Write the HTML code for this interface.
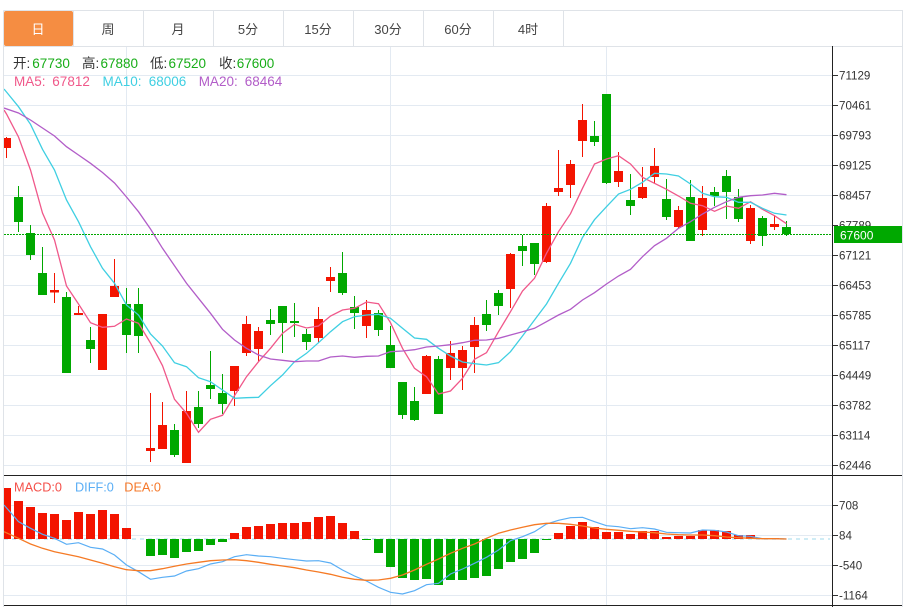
<!DOCTYPE html>
<html><head><meta charset="utf-8"><style>
html,body{margin:0;padding:0;background:#fff;width:906px;height:607px;overflow:hidden}
svg{display:block}
text{font-family:"Liberation Sans","Noto Sans CJK SC",sans-serif;font-size:11.6px}
.t{font-size:13px;fill:#444;text-anchor:middle}
.a{fill:#333}.g{fill:#18ad18}
.i{font-size:13.5px}
.m{font-size:12.7px}
</style></head><body>
<svg width="906" height="607" viewBox="0 0 906 607" xmlns="http://www.w3.org/2000/svg">
<defs><clipPath id="c"><rect x="4" y="46" width="828" height="561"/></clipPath></defs>
<rect width="906" height="607" fill="#fff"/>
<!-- grid -->
<path d="M4 75.5H832M4 105.5H832M4 135.5H832M4 165.5H832M4 195.5H832M4 225.5H832M4 255.5H832M4 285.5H832M4 315.5H832M4 345.5H832M4 375.5H832M4 405.5H832M4 435.5H832M4 465.5H832M4 505.5H832M4 535.5H832M4 565.5H832M4 595.5H832M126.5 47V605M390.5 47V605M606.5 47V605" stroke="#e3eaf2" stroke-width="1" fill="none"/>
<!-- frame and tabs -->
<path d="M3.5 10.5H902.5V607M3.5 10.5V607M4 46.5H902M73.5 11V46M143.5 11V46M213.5 11V46M283.5 11V46M353.5 11V46M423.5 11V46M493.5 11V46M563.5 11V46" stroke="#dfe3e8" fill="none"/>
<rect x="4" y="11" width="69" height="35" rx="2" fill="#f58d42"/>
<text x="38" y="34" class="t" style="fill:#fff">日</text>
<text x="108" y="34" class="t">周</text>
<text x="178" y="34" class="t">月</text>
<text x="248" y="34" class="t">5分</text>
<text x="318" y="34" class="t">15分</text>
<text x="388" y="34" class="t">30分</text>
<text x="458" y="34" class="t">60分</text>
<text x="528" y="34" class="t">4时</text>
<!-- info -->
<text x="13" y="68" class="a i">开:</text><text x="32.3" y="68" class="g i">67730</text>
<text x="82" y="68" class="a i">高:</text><text x="100.5" y="68" class="g i">67880</text>
<text x="150" y="68" class="a i">低:</text><text x="168.5" y="68" class="g i">67520</text>
<text x="219" y="68" class="a i">收:</text><text x="236.7" y="68" class="g i">67600</text>
<g class="i">
<text x="14" y="86" class="i" fill="#f0588a">MA5:</text><text x="52.3" y="86" class="i" fill="#f0588a">67812</text>
<text x="102.5" y="86" class="i" fill="#3fcfe2">MA10:</text><text x="148.7" y="86" class="i" fill="#3fcfe2">68006</text>
<text x="198.7" y="86" class="i" fill="#b25dc8">MA20:</text><text x="244.7" y="86" class="i" fill="#b25dc8">68464</text>
</g>
<g clip-path="url(#c)">
<!-- red wicks -->
<path stroke="#f31400" fill="none" d="M6.5 137V158M54.5 273V303M78.5 306V315M114.5 259V297M150.5 393V462M162.5 402V449M186.5 391V463M246.5 316V356M258.5 327V361M318.5 307V343M330.5 267V292M366.5 300V338M426.5 355V394M450.5 341V380M462.5 346V390M474.5 317V373M510.5 253V308M546.5 203V263M558.5 150V196M570.5 160V198M582.5 104V157M618.5 152V187M642.5 167V199M654.5 148V183M678.5 206V228M702.5 186V236M750.5 205V244M774.5 215V230"/>
<!-- green wicks -->
<path stroke="#00a800" fill="none" d="M18.5 186V232M30.5 225V260M42.5 247V295M66.5 292V373M90.5 327V363M126.5 288V353M138.5 288V353M174.5 424V457M198.5 391V428M210.5 351V399M222.5 374V414M270.5 309V335M282.5 306V353M294.5 303V337M306.5 329V350M342.5 252V295M354.5 296V329M378.5 310V336M390.5 326V368M402.5 382V419M414.5 387V421M438.5 356V414M486.5 300V331M498.5 290V315M522.5 235V266M534.5 243V275M594.5 121V146M606.5 94V184M630.5 174V215M666.5 179V220M690.5 180V241M714.5 187V206M726.5 170V219M738.5 189V222M762.5 216V246M786.5 221V236"/>
<!-- red bodies -->
<path fill="#f31400" d="M2 138h9v10h-9zM50 290h9v2.500h-9zM74 313h9v2h-9zM98 314h9v56h-9zM110 286h9v11h-9zM146 448h9v3h-9zM158 425h9v24h-9zM182 411h9v52h-9zM230 366h9v25h-9zM242 324h9v29h-9zM254 331h9v18h-9zM314 319h9v19h-9zM326 277h9v4h-9zM362 310h9v16h-9zM422 356h9v38h-9zM446 353h9v15h-9zM458 350h9v18h-9zM470 325h9v22h-9zM506 254h9v35h-9zM542 206h9v56h-9zM554 188h9v4h-9zM566 164h9v21h-9zM578 120h9v21h-9zM614 171h9v11h-9zM638 187h9v11h-9zM650 166h9v11h-9zM674 210h9v17h-9zM698 198h9v32h-9zM746 208h9v33h-9zM770 224h9v3h-9z"/>
<path stroke="#f31400" fill="none" d="M234.500 366V406"/>
<!-- green bodies -->
<path fill="#00a800" d="M14 197h9v25h-9zM26 233h9v22h-9zM38 273h9v22h-9zM62 297h9v76h-9zM86 340h9v9h-9zM122 304h9v31h-9zM134 304h9v32h-9zM170 430h9v25h-9zM194 407h9v17h-9zM206 385h9v4h-9zM218 393h9v11h-9zM266 320h9v4h-9zM278 306h9v17h-9zM290 321h9v2h-9zM302 334h9v8h-9zM338 273h9v20h-9zM350 307h9v6h-9zM374 313h9v17h-9zM386 345h9v23h-9zM398 382h9v33h-9zM410 401h9v19h-9zM434 359h9v55h-9zM482 314h9v11h-9zM494 293h9v13h-9zM518 246h9v5h-9zM530 243h9v21h-9zM590 136h9v6h-9zM602 94h9v89h-9zM626 200h9v6h-9zM662 199h9v18h-9zM686 197h9v44h-9zM710 192h9v4h-9zM722 176h9v16h-9zM734 197h9v22h-9zM758 218h9v18h-9zM782 227h9v7h-9z"/>
<!-- MA lines -->
<polyline fill="none" stroke="#f0588a" stroke-width="1.300" points="4,110 6.500,114 18.500,137 30.500,170 42.500,213 54.500,240 66.500,286 78.500,304 90.500,322.700 102.500,327.300 114.500,326.300 126.500,319 138.500,323.300 150.500,343 162.500,365.700 174.500,399.300 186.500,413.300 198.500,432.300 210.500,419.300 222.500,415.300 234.500,395.700 246.500,376.700 258.500,361.700 270.500,348.300 282.500,333.300 294.500,324.300 306.500,328 318.500,326 330.500,316 342.500,310 354.500,308.300 366.500,302 378.500,303.700 390.500,322.700 402.500,348.300 414.500,368.300 426.500,376.700 438.500,394 450.500,391 462.500,378.300 474.500,359.300 486.500,352.700 498.500,331.700 510.500,311.700 522.500,291 534.500,278.300 546.500,253.300 558.500,231.700 570.500,213.700 582.500,188.300 594.500,164 606.500,159 618.500,155.700 630.500,164 642.500,177.300 654.500,183.300 666.500,189.300 678.500,196 690.500,203.300 702.500,205.700 714.500,211.300 726.500,206 738.500,208.300 750.500,201.700 762.500,209.300 774.500,215.700 786.500,223.700"/>
<polyline fill="none" stroke="#3fcfe2" stroke-width="1.300" points="4,89 6.500,92 18.500,106.700 30.500,124.300 42.500,149.300 54.500,170 66.500,200 78.500,221.700 90.500,246.700 102.500,268.300 114.500,283.300 126.500,305 138.500,315 150.500,334 162.500,346 174.500,362.700 186.500,366.700 198.500,377.700 210.500,381.700 222.500,390 234.500,398.300 246.500,397.700 258.500,397.300 270.500,385.700 282.500,375 294.500,361.700 306.500,353.300 318.500,342.700 330.500,331.700 342.500,321.700 354.500,316.700 366.500,315 378.500,314.300 390.500,318.300 402.500,328.300 414.500,338 426.500,339.300 438.500,348.300 450.500,356 462.500,362 474.500,363.700 486.500,365 498.500,362.700 510.500,351.700 522.500,336 534.500,320 546.500,304 558.500,283.300 570.500,263.300 582.500,237.500 594.500,219.700 606.500,206.700 618.500,194 630.500,189.300 642.500,182.300 654.500,173.300 666.500,174 678.500,176 690.500,184 702.500,193.300 714.500,196.700 726.500,197.300 738.500,202.300 750.500,202.300 762.500,208.300 774.500,213.300 786.500,215"/>
<polyline fill="none" stroke="#b25dc8" stroke-width="1.300" points="4,108 18.500,113 30.500,120 42.500,128 54.500,136 66.500,146.700 78.500,155 90.500,163.300 102.500,172.500 114.500,183 126.500,197 138.500,211.700 150.500,229 162.500,248.300 174.500,265.700 186.500,283.300 198.500,298.300 210.500,313.300 222.500,329.300 234.500,340 246.500,348.300 258.500,355 270.500,359 282.500,360.300 294.500,361.700 306.500,361 318.500,361 330.500,357 342.500,356 354.500,357.300 366.500,356.300 378.500,356 390.500,351.700 402.500,351 414.500,349.700 426.500,347 438.500,346 450.500,344.700 462.500,342.700 474.500,340.300 486.500,340 498.500,338.300 510.500,335 522.500,331.700 534.500,328.300 546.500,321.700 558.500,315 570.500,309.300 582.500,300 594.500,292.700 606.500,284 618.500,276 630.500,269.300 642.500,256.700 654.500,245.700 666.500,238.300 678.500,228.300 690.500,221.700 702.500,214 714.500,207.300 726.500,201.700 738.500,197.300 750.500,195.700 762.500,195 774.500,193.300 786.500,194.700"/>
<!-- price line -->
<path d="M4 234.500H832" stroke="#00a800" stroke-dasharray="2 1" fill="none"/>
<!-- MACD zero -->
<path d="M4 539H830" stroke="#bfe6f2" stroke-width="1.500" stroke-dasharray="4 4" fill="none"/>
<!-- MACD bars -->
<path fill="#f31400" d="M2 488h9v51h-9zM14 501h9v38h-9zM26 507h9v32h-9zM38 513h9v26h-9zM50 514h9v25h-9zM62 520h9v19h-9zM74 512h9v27h-9zM86 514h9v25h-9zM98 510h9v29h-9zM110 514h9v25h-9zM122 528h9v11h-9zM230 533h9v6h-9zM242 527h9v12h-9zM254 526h9v13h-9zM266 524h9v15h-9zM278 523h9v16h-9zM290 523h9v16h-9zM302 522h9v17h-9zM314 517h9v22h-9zM326 516h9v23h-9zM338 523h9v16h-9zM350 531h9v8h-9zM554 533h9v6h-9zM566 526h9v13h-9zM578 522h9v17h-9zM590 527h9v12h-9zM602 532h9v7h-9zM614 532h9v7h-9zM626 534h9v5h-9zM638 531h9v8h-9zM650 531h9v8h-9zM662 537h9v2h-9zM674 536h9v3h-9zM686 536h9v3h-9zM698 530h9v9h-9zM710 530h9v9h-9zM722 531h9v8h-9zM734 535h9v4h-9zM746 535h9v4h-9zM770 538h9v1h-9z"/>
<path fill="#00a800" d="M146 539h9v17h-9zM158 539h9v16h-9zM170 539h9v19h-9zM182 539h9v13h-9zM194 539h9v12h-9zM206 539h9v6h-9zM218 539h9v3h-9zM362 539h9v1h-9zM374 539h9v14h-9zM386 539h9v28h-9zM398 539h9v39h-9zM410 539h9v41h-9zM422 539h9v40h-9zM434 539h9v46h-9zM446 539h9v41h-9zM458 539h9v41h-9zM470 539h9v39h-9zM482 539h9v37h-9zM494 539h9v30h-9zM506 539h9v23h-9zM518 539h9v20h-9zM530 539h9v14h-9zM542 539h9v1h-9z"/>
<polyline fill="none" stroke="#5aaef5" stroke-width="1.200" points="4,505 18.500,521.700 30.500,528.300 42.500,534.300 54.500,538.300 66.500,544.300 78.500,542.700 90.500,547.300 102.500,549 114.500,555 126.500,565 138.500,571.700 150.500,579.300 162.500,577.300 174.500,576 186.500,571 198.500,568.700 210.500,564 222.500,561.700 234.500,556.700 246.500,554.700 258.500,556 270.500,556.700 282.500,558.300 294.500,559.700 306.500,561 318.500,560.700 330.500,563 342.500,570 354.500,576 366.500,581 378.500,587.300 390.500,592.300 402.500,594 414.500,590.700 426.500,584.700 438.500,583.300 450.500,574 462.500,569 474.500,563.300 486.500,557.300 498.500,550 510.500,540.700 522.500,536.700 534.500,531.700 546.500,524 558.500,520.300 570.500,517.700 582.500,517.300 594.500,521.700 606.500,525.700 618.500,526.700 630.500,528.700 642.500,527.700 654.500,529 666.500,532.300 678.500,532.700 690.500,533 702.500,530 714.500,530.300 726.500,532 738.500,535.700 750.500,536.300 762.500,538.700 774.500,538.700 786.500,539"/>
<polyline fill="none" stroke="#f57a25" stroke-width="1.300" points="4,531.700 18.500,538.300 30.500,544 42.500,548.300 54.500,551.700 66.500,554.300 78.500,556.700 90.500,560 102.500,563.300 114.500,566.700 126.500,569.700 138.500,570.700 150.500,570.700 162.500,568.700 174.500,566.300 186.500,564 198.500,562.300 210.500,560.700 222.500,560 234.500,559.700 246.500,560.700 258.500,562.300 270.500,564.300 282.500,566 294.500,567.700 306.500,570 318.500,572 330.500,574.300 342.500,577.300 354.500,579.300 366.500,580.300 378.500,580 390.500,578.300 402.500,575 414.500,570 426.500,564.300 438.500,559 450.500,553.300 462.500,548.300 474.500,544 486.500,538.300 498.500,533.300 510.500,530 522.500,527.300 534.500,524.700 546.500,523.300 558.500,523.300 570.500,524.300 582.500,526 594.500,528 606.500,529.300 618.500,530.300 630.500,531.300 642.500,532 654.500,532.700 666.500,534 678.500,534.700 690.500,535 702.500,535 714.500,535.700 726.500,537 738.500,537.700 750.500,538.300 762.500,538.700 774.500,538.700 786.500,539"/>
</g>
<text x="14" y="491.500" class="m" fill="#f4504a">MACD:0</text>
<text x="75" y="491.500" class="m" fill="#5aaef5">DIFF:0</text>
<text x="124.300" y="491.500" class="m" fill="#f5782a">DEA:0</text>
<!-- axes -->
<path d="M4 475.500H902M4 605.500H902M832.500 46V607" stroke="#222" fill="none"/>
<path d="M833 75.500h5M833 105.500h5M833 135.500h5M833 165.500h5M833 195.500h5M833 225.500h5M833 255.500h5M833 285.500h5M833 315.500h5M833 345.500h5M833 375.500h5M833 405.500h5M833 435.500h5M833 465.500h5M833 505.500h5M833 535.500h5M833 565.500h5M833 595.500h5" stroke="#333" fill="none"/>
<g class="a">
<text x="839" y="79.500">71129</text><text x="839" y="109.500">70461</text><text x="839" y="139.500">69793</text><text x="839" y="169.500">69125</text><text x="839" y="199.500">68457</text><text x="839" y="229.500">67789</text><text x="839" y="259.500">67121</text><text x="839" y="289.500">66453</text><text x="839" y="319.500">65785</text><text x="839" y="349.500">65117</text><text x="839" y="379.500">64449</text><text x="839" y="409.500">63782</text><text x="839" y="439.500">63114</text><text x="839" y="469.500">62446</text>
<text x="839" y="509.500">708</text><text x="839" y="539.500">84</text><text x="839" y="569.500">-540</text><text x="839" y="599.500">-1164</text>
</g>
<rect x="834" y="226" width="68" height="17" fill="#00a800"/>
<text x="840" y="239.500" fill="#fff" style="font-size:12px">67600</text>
</svg>
</body></html>
